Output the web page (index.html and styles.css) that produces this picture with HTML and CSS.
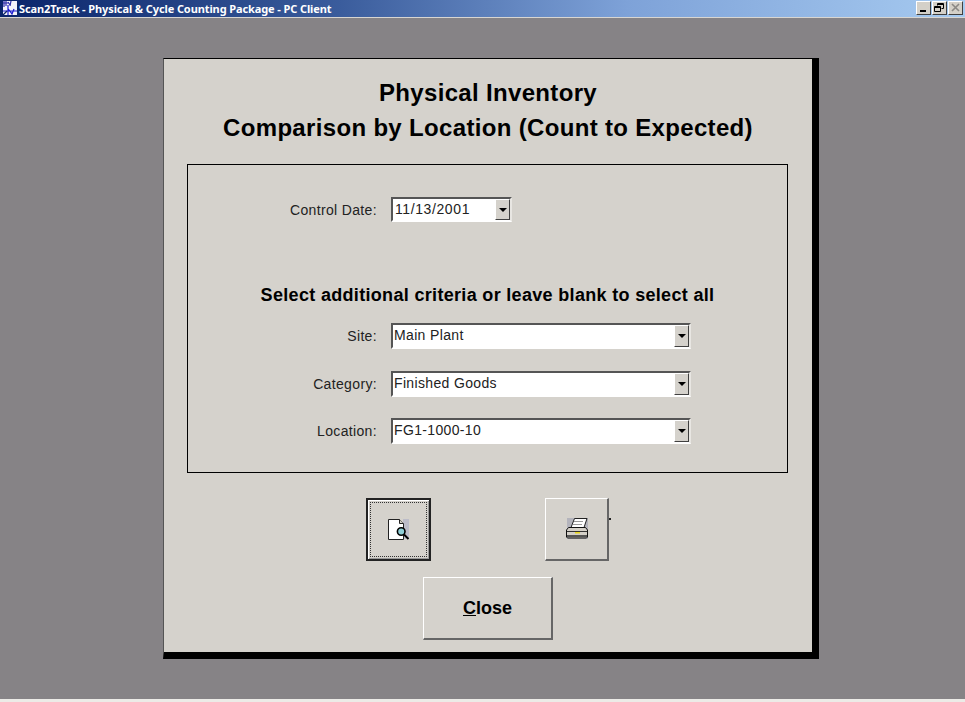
FILE: index.html
```html
<!DOCTYPE html>
<html lang="en">
<head>
<meta charset="utf-8">
<title>Scan2Track - Physical &amp; Cycle Counting Package - PC Client</title>
<link rel="stylesheet" href="styles.css">
</head>
<body>
<header class="titlebar">
  <svg class="app-icon" width="16" height="16" viewBox="0 0 16 16">
    <rect x="1" y="1" width="14" height="14" fill="#f4f4fa"/>
    <path d="M1 3h5M2 1v6M4 1v5M6 2l2 3M9 1l-1 5" stroke="#2a2aa8" stroke-width="1.2" fill="none"/>
    <path d="M1 11h14M6 5v10M6 9c2 2 3 3 4 5l2-5" stroke="#1a1ad0" stroke-width="1.2" fill="none"/>
    <path d="M1 15l4-4" stroke="#0a246a" stroke-width="1.2"/>
  </svg>
  <span class="title-text">Scan2Track - Physical &amp; Cycle Counting Package - PC Client</span>
  <div class="win-buttons">
    <button class="win-btn" aria-label="Minimize"><svg width="13" height="12" viewBox="0 0 13 12"><rect x="3" y="8" width="6" height="2" fill="#000"/></svg></button>
    <button class="win-btn" aria-label="Restore"><svg width="13" height="12" viewBox="0 0 13 12"><path d="M4.500 3.500V1.500h6v5h-2M4 2.500h6" stroke="#000" fill="none"/><path d="M1.500 4.500h6v5h-6zM1 5.500h7" stroke="#000" fill="none"/></svg></button>
    <button class="win-btn" aria-label="Close"><svg width="13" height="12" viewBox="0 0 13 12"><path d="M3 2l7 7M10 2l-7 7" stroke="#8a8884" stroke-width="1.600"/></svg></button>
  </div>
</header>

<main class="workspace">
  <section class="panel">
    <h1 class="heading">Physical Inventory</h1>
    <h2 class="heading heading-sub">Comparison by Location (Count to Expected)</h2>

    <div class="frame">
      <div class="row row-date">
        <label class="label">Control Date:</label>
        <div class="combo combo-date"><span class="combo-value">11/13/2001</span><span class="combo-arrow"><i></i></span></div>
      </div>
      <p class="criteria">Select additional criteria or leave blank to select all</p>
      <div class="row row-site">
        <label class="label">Site:</label>
        <div class="combo"><span class="combo-value">Main Plant</span><span class="combo-arrow"><i></i></span></div>
      </div>
      <div class="row row-category">
        <label class="label">Category:</label>
        <div class="combo"><span class="combo-value">Finished Goods</span><span class="combo-arrow"><i></i></span></div>
      </div>
      <div class="row row-location">
        <label class="label">Location:</label>
        <div class="combo"><span class="combo-value">FG1-1000-10</span><span class="combo-arrow"><i></i></span></div>
      </div>
    </div>

    <div class="icon-buttons">
      <button class="btn btn-icon btn-default" aria-label="Preview">
        <span class="focus-ring">
          <svg width="24" height="24" viewBox="0 0 24 24">
            <rect x="16" y="1" width="6" height="20" fill="#bcbcc8"/>
            <path d="M1.500 1.500h11l4 4v16h-15z" fill="#fff" stroke="#222"/>
            <path d="M12.500 1.500v4h4" fill="#d4d0c8" stroke="#222"/>
            <circle cx="14.200" cy="13.500" r="3.800" fill="#8fd0d8" stroke="#000" stroke-width="1.600"/>
            <path d="M17 16.500l4.500 4.500" stroke="#000" stroke-width="2"/>
          </svg>
        </span>
      </button>
      <button class="btn btn-icon btn-print" aria-label="Print">
        <svg width="26" height="24" viewBox="0 0 26 24">
          <rect x="3" y="1" width="21" height="21" fill="#b4b4bc"/>
          <path d="M10.500 1.500h12.500l-3 9h-13z" fill="#fff" stroke="#222"/>
          <path d="M10 4.500h9M9 7.500h9" stroke="#999"/>
          <path d="M4.500 10.500h17l2 2.500v7l-1 1h-19l-1-1v-7z" fill="#d4d0c8" stroke="#111"/>
          <path d="M3 14.500h20" stroke="#333"/>
          <rect x="11" y="15" width="5" height="1.500" fill="#e8d820"/>
          <path d="M3 18h20v2.500h-20z" fill="#555"/>
        </svg>
      </button>
    </div>

    <button class="btn btn-close"><span><u>C</u>lose</span></button>
  </section>
</main>
<div class="statusline"></div>
</body>
</html>
```

FILE: styles.css
```css
* { box-sizing: border-box; }
html, body { margin: 0; padding: 0; }
body {
  width: 965px;
  height: 702px;
  overflow: hidden;
  display: flex;
  flex-direction: column;
  background: #868386;
  font-family: "Liberation Sans", Arial, sans-serif;
  color: #000;
}

.titlebar {
  flex: 0 0 18px;
  display: flex;
  align-items: center;
  padding: 0 2px 1px 2px;
  border-bottom: 1px solid #d8d6d2;
  background: linear-gradient(90deg, #0a246a 0%, #3a5c9c 35%, #7ea2d8 65%, #a6caf0 100%);
}
.app-icon { flex: none; }
.title-text {
  margin-left: 1px;
  color: #fff;
  font-family: "Noto Sans", "Liberation Sans", sans-serif;
  font-size: 11px;
  font-weight: 700;
  letter-spacing: -0.1px;
  white-space: nowrap;
}
.win-buttons { margin-left: auto; display: flex; gap: 1px; }
.win-btn {
  width: 15px;
  height: 14px;
  padding: 0;
  display: flex;
  align-items: center;
  justify-content: center;
  background: #d4d0c8;
  border: 1px solid;
  border-color: #fff #404040 #404040 #fff;
}

.workspace {
  flex: 1;
  padding: 40px 0 0 163px;
}

.panel {
  width: 656px;
  height: 601px;
  display: flex;
  flex-direction: column;
  align-items: center;
  background: #d5d2cc;
  border-top: 1px solid #000;
  border-left: 1px solid #555;
  border-right: 7px solid #000;
  border-bottom: 7px solid #000;
}

.heading {
  margin: 0;
  font-size: 24px;
  line-height: 28px;
  font-weight: 700;
  letter-spacing: 0.33px;
  text-align: center;
}
.panel > .heading:first-child { margin-top: 20px; }
.heading-sub { margin-top: 7px; }

.frame {
  width: 601px;
  height: 309px;
  margin: 22px 1px 0 0;
  padding-top: 32px;
  border: 1px solid #000;
}

.row {
  display: grid;
  grid-template-columns: 189px 300px;
  column-gap: 14px;
  align-items: center;
}
.row-date { height: 24px; }
.row-site, .row-category, .row-location { height: 26px; }
.row-category { margin-top: 22px; }
.row-location { margin-top: 21px; }

.label {
  font-size: 14px;
  letter-spacing: 0.35px;
  text-align: right;
  color: #222;
}

.combo {
  display: flex;
  align-items: stretch;
  height: 100%;
  background: #fff;
  border: 2px solid;
  border-color: #555 #e8e6e2 #fff #555;
}
.combo-date { width: 121px; }
.combo-value {
  flex: 1;
  padding-left: 1px;
  font-size: 14px;
  letter-spacing: 0.35px;
  line-height: 21px;
  white-space: nowrap;
  overflow: hidden;
  color: #222;
}
.combo-date .combo-value { padding-left: 2px; letter-spacing: 0.6px; }
.combo-arrow {
  flex: 0 0 15px;
  display: flex;
  align-items: center;
  justify-content: center;
  background: #d5d2cc;
  border: 1px solid;
  border-color: #fff #404040 #404040 #fff;
}
.combo-arrow i {
  width: 0;
  height: 0;
  border-left: 4px solid transparent;
  border-right: 4px solid transparent;
  border-top: 4px solid #000;
}

.criteria {
  margin: 62px 0 16px;
  height: 24px;
  font-size: 18px;
  letter-spacing: 0.32px;
  line-height: 24px;
  font-weight: 700;
  text-align: center;
}

.btn {
  display: flex;
  align-items: center;
  justify-content: center;
  padding: 0;
  background: #d5d2cc;
  border-style: solid;
  border-width: 1px 2px 2px 1px;
  border-color: #fff #666 #666 #fff;
  font-family: inherit;
  color: #000;
}

.icon-buttons {
  margin: 25px 1px 0 0;
  display: flex;
  gap: 114px;
}
.btn-icon { width: 65px; height: 63px; }
.btn-print { position: relative; width: 64px; }
.btn-print::after {
  content: "";
  position: absolute;
  right: -4px;
  top: 19px;
  width: 2px;
  height: 2px;
  background: #222;
}
.btn-default {
  border: 2px solid #222;
  box-shadow: inset 1px 1px 0 #fff, inset -1px -1px 0 #999;
}
.focus-ring {
  width: 57px;
  height: 55px;
  display: flex;
  align-items: center;
  justify-content: center;
  border: 1px dotted #333;
}

.btn-close {
  width: 130px;
  height: 63px;
  margin-top: 16px;
  font-size: 18px;
  font-weight: 700;
}

.statusline {
  flex: 0 0 3px;
  background: #ecebe7;
}
```
